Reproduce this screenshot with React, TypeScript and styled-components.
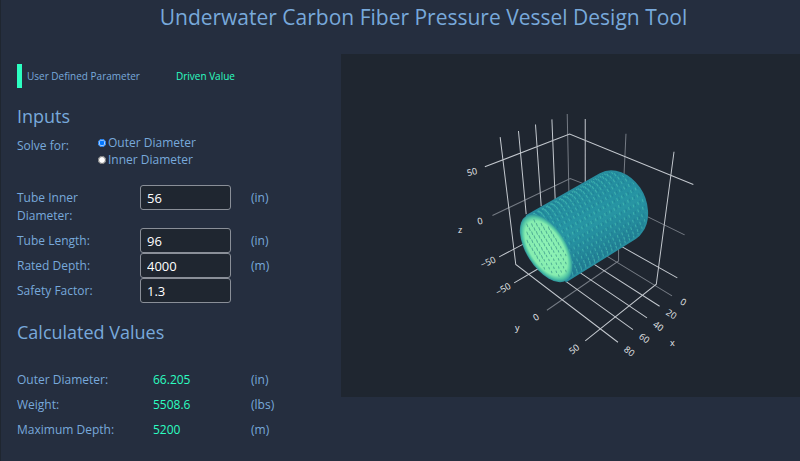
import React, { useState } from "react";
import styled, { createGlobalStyle } from "styled-components";

const Global = createGlobalStyle`
  * { box-sizing: border-box; }
  html, body, #root { min-height: 100vh; }
  body { margin: 0; background: #252e3f; color: #78a9db; font: 12px/18px "Open Sans", sans-serif; }
  h1, h2 { margin: 0; font-weight: 400; }
`;
const Page = styled.div`
  min-height: 100vh;
  border-left: 1px solid #1f2630;
`;
const Title = styled.h1`
  padding: 2px 0 21px 46px;
  font-size: 21px;
  line-height: 31px;
  text-align: center;
`;
const Columns = styled.main`
  display: grid;
  grid-template-columns: 17fr 23fr;
  align-items: start;
`;
const Panel = styled.div`
  padding: 10px 16px 0;
`;
const Legend = styled.div`
  display: flex;
  gap: 36px;
  font-size: 10px;
  line-height: 24px;
`;
const UserKey = styled.span`
  border-left: 5px solid #2cfec1;
  padding-left: 5px;
`;
const DrivenKey = styled.span`
  color: #2cfec1;
`;
const Heading = styled.h2`
  font-size: 18px;
  line-height: 26px;
`;
const InputsHeading = styled(Heading)`
  margin-top: 15px;
`;
const Solve = styled.div`
  display: grid;
  grid-template-columns: 81px 1fr;
  margin: 5px 0 17px;
`;
const SolveLabel = styled.span`
  padding-top: 3px;
`;
const Option = styled.label`
  display: flex;
  align-items: center;
  gap: 2px;
  line-height: 17px;
`;
const Radio = styled.input`
  width: 8px;
  height: 8px;
  margin: 0;
`;
const Row = styled.div`
  display: grid;
  grid-template-columns: 123px 91px 1fr;
  align-items: start;
`;
const Name = styled.label`
  max-width: 100px;
  padding: 4px 0 3px;
`;
const Field = styled.input`
  width: 100%;
  height: 25px;
  padding: 0 6px;
  border: 1px solid #8a8f98;
  border-radius: 3px;
  background: #1f2630;
  color: #fff;
  font: 13px "Open Sans", sans-serif;
`;
const Unit = styled.span`
  padding: 4px 0 0 20px;
`;
const ResultsHeading = styled(Heading)`
  margin: 16px 0 22px;
`;
const Results = styled.dl`
  margin: 0;
`;
const Result = styled.div`
  display: grid;
  grid-template-columns: 136px 98px 1fr;
  line-height: 25px;
`;
const Term = styled.dt``;
const Value = styled.dd`
  margin: 0;
  color: #2cfec1;
`;
const ResultUnit = styled.dd`
  margin: 0;
`;
const Plot = styled.figure`
  margin: 0;
  background: #1f2630;
`;
const Chart = styled.svg`
  display: block;
  width: 100%;
  height: auto;
`;

const inputs = [
  { id: "inner", label: "Tube Inner Diameter:", value: "56", unit: "(in)" },
  { id: "length", label: "Tube Length:", value: "96", unit: "(in)" },
  { id: "depth", label: "Rated Depth:", value: "4000", unit: "(m)" },
  { id: "safety", label: "Safety Factor:", value: "1.3", unit: "" },
];
const results = [
  ["Outer Diameter:", "66.205", "(in)"],
  ["Weight:", "5508.6", "(lbs)"],
  ["Maximum Depth:", "5200", "(m)"],
];

const bright = [
  "M500 137L515.6 264.3L617.7 342",
  "M518.3 131L526 214", "M535.3 124.5L541 206", "M551.7 119.3L555 200",
  "M585 119V186", "M673.7 151.7L656 284L585 340.7",
  "M484.7 166.7L569.4 134L693 184.3",
  "M499 256.7L524 243.5", "M618 244.5L677 277.7",
  "M566 281.5L632.7 329.3", "M579 272L646.7 317.7", "M592 263L659.3 306",
  "M514 282.7L538 268.5",
];
const dim = [
  "M567 114L568.7 192", "M625.7 133.7L623.7 176",
  "M492.3 215.3L570 178.5L587 185", "M645 215.5L684.3 234.7",
  "M605 255L671.7 295.7", "M546.7 310L618.3 260.7V242",
];
const ticks: [number, number, number, string][] = [
  [472, 172, -14, "50"], [480, 221, -14, "0"], [488, 262, -24, "−50"],
  [503, 289, -30, "−50"], [536, 317, -32, "0"], [574, 349, -38, "50"],
  [629, 351, 38, "80"], [644, 338, 36, "60"], [658, 326, 35, "40"],
  [671, 314, 33, "20"], [683, 302, 30, "0"],
  [460, 230, 0, "z"], [517, 328, 0, "y"], [672, 343, 0, "x"],
];

const WALL = "M527 215.500L600 174C613 167 629 174 639 188C648 201 650 221 641 232C640 234 638 236 635 238L566 281Z";
const AXIS = { x: 76, y: -44 };

function wallDashes(shift: number, length: number) {
  let d = "";
  const rows = 17;
  const columns = 18;
  for (let i = 0; i < rows; i++) {
    const a = -Math.PI * (0.04 + (0.92 * i) / (rows - 1));
    const c = Math.cos(a), s = Math.sin(a);
    const x0 = 546 + 38 * c * 0.53 - 20 * s * 0.848;
    const y0 = 248 + 38 * c * 0.848 + 20 * s * 0.53;
    // The far rim bulges outward, so the middle rows run longer.
    const reach = 1 - 0.09 * s;
    for (let j = 0; j <= columns + 1; j++) {
      const t = ((j + (i % 2) / 2 + shift) / columns) * reach;
      const x = x0 + AXIS.x * t, y = y0 + AXIS.y * t;
      const lean = 0.6 + 0.9 * Math.max(0, -c);
      d += `M${x.toFixed(1)} ${y.toFixed(1)}l${lean.toFixed(1)} ${length}`;
    }
  }
  return d;
}
function faceDashes() {
  let d = "";
  for (let i = -3; i <= 3; i++) {
    for (let j = -7; j <= 7; j++) {
      const u = j * 4.6 + (i % 2) * 2.3, v = i * 4.2;
      if ((u * u) / 1000 + (v * v) / 225 > 1) continue;
      const x = 546 + u * 0.53 - v * 0.848, y = 247 + u * 0.848 + v * 0.53;
      const length = u < 6 ? 2.6 : 1.6;
      d += `M${x.toFixed(1)} ${y.toFixed(1)}l${(length * 0.4).toFixed(1)} ${length}`;
    }
  }
  return d;
}

function VesselPlot() {
  return (
    <Plot>
      <Chart viewBox="341 54 459 343" role="img" aria-label="Pressure vessel 3D surface">
        <defs>
          <linearGradient id="wall" gradientUnits="userSpaceOnUse" x1="575" y1="188" x2="610" y2="258">
            <stop offset="0" stopColor="#258da0" />
            <stop offset=".5" stopColor="#2896a4" />
            <stop offset="1" stopColor="#237c93" />
          </linearGradient>
          <radialGradient id="face">
            <stop offset="0" stopColor="#8ff3b6" />
            <stop offset=".8" stopColor="#86edb0" />
            <stop offset=".91" stopColor="#50c5a4" />
            <stop offset="1" stopColor="#2c929c" />
          </radialGradient>
          <clipPath id="hull"><path d={WALL} /></clipPath>
        </defs>
        <g fill="none" strokeWidth="1">
          <path d={dim.join("")} stroke="#757b84" />
          <path d={bright.join("")} stroke="#c3c8ce" />
        </g>
        <path d={WALL} fill="url(#wall)" />
        <g clipPath="url(#hull)" strokeLinecap="round">
          <path d={wallDashes(0.4, 2)} stroke="#1d7288" strokeWidth="1" opacity=".4" />
          <path d={wallDashes(0, 2)} stroke="#4cc4b5" strokeWidth="1" opacity=".65" />
        </g>
        <path d={WALL} fill="none" stroke="#278c9e" strokeWidth="2" />
        <g transform="translate(546 248) rotate(58)">
          <ellipse rx="38" ry="20" fill="url(#face)" />
        </g>
        <path d={faceDashes()} stroke="#4aa893" strokeWidth="1" strokeLinecap="round" opacity=".9" />
        <g fill="#e8ebee" fontFamily="Open Sans, sans-serif" fontSize="9" textAnchor="middle">
          {ticks.map(([x, y, r, t]) => (
            <text key={`${x}-${y}`} transform={`translate(${x} ${y}) rotate(${r})`} y="3">{t}</text>
          ))}
        </g>
      </Chart>
    </Plot>
  );
}

export default function App() {
  const [solve, setSolve] = useState("Outer Diameter");
  return (
    <Page>
      <Global />
      <Title>Underwater Carbon Fiber Pressure Vessel Design Tool</Title>
      <Columns>
        <Panel>
          <Legend>
            <UserKey>User Defined Parameter</UserKey>
            <DrivenKey>Driven Value</DrivenKey>
          </Legend>
          <InputsHeading>Inputs</InputsHeading>
          <Solve role="radiogroup" aria-labelledby="solve">
            <SolveLabel id="solve">Solve for:</SolveLabel>
            <div>
              {["Outer Diameter", "Inner Diameter"].map((o) => (
                <Option key={o}>
                  <Radio type="radio" name="solve" checked={solve === o} onChange={() => setSolve(o)} />
                  {o}
                </Option>
              ))}
            </div>
          </Solve>
          {inputs.map((f) => (
            <Row key={f.id}>
              <Name htmlFor={f.id}>{f.label}</Name>
              <Field id={f.id} defaultValue={f.value} />
              <Unit>{f.unit}</Unit>
            </Row>
          ))}
          <ResultsHeading>Calculated Values</ResultsHeading>
          <Results>
            {results.map(([k, v, u]) => (
              <Result key={k}>
                <Term>{k}</Term>
                <Value>{v}</Value>
                <ResultUnit>{u}</ResultUnit>
              </Result>
            ))}
          </Results>
        </Panel>
        <VesselPlot />
      </Columns>
    </Page>
  );
}
